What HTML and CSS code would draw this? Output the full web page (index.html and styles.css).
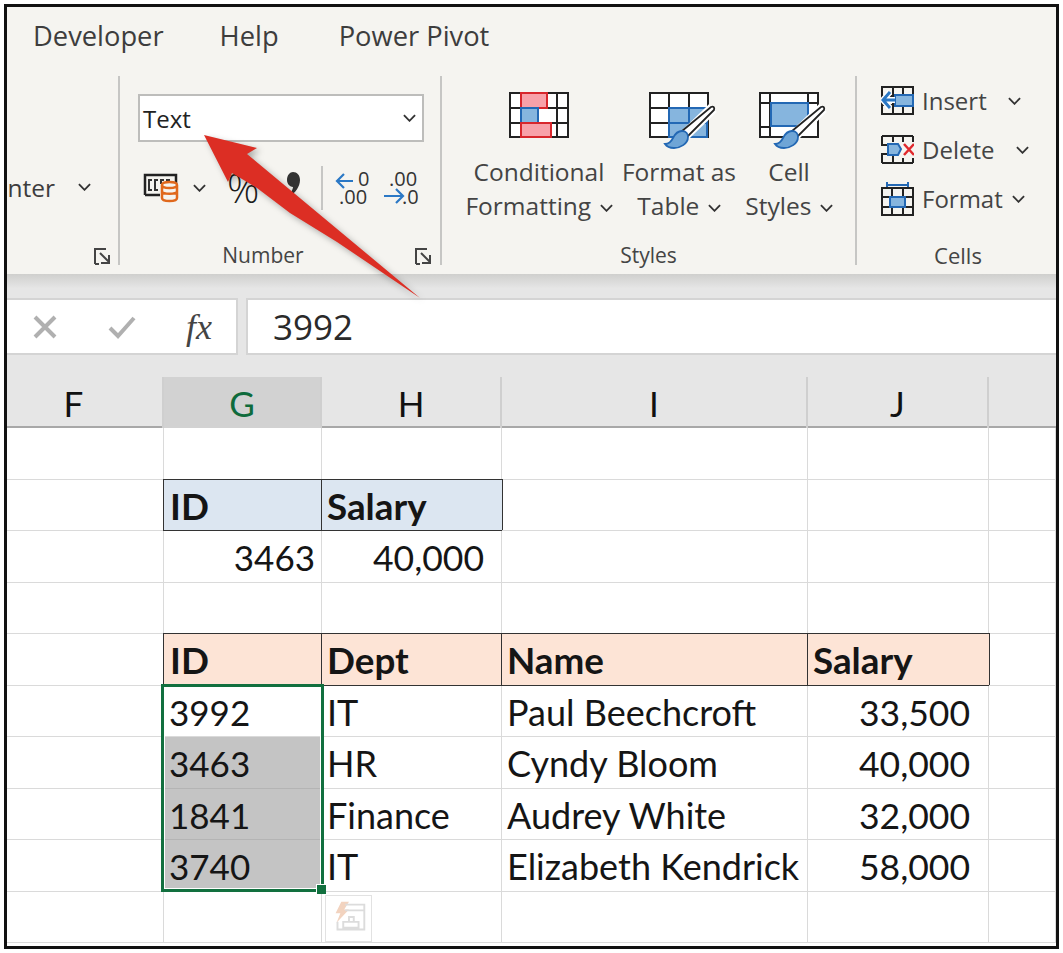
FILE: index.html
```html
<!DOCTYPE html>
<html lang="en">
    <head>
        <meta charset="UTF-8" />
        <title>Excel ribbon and sheet</title>
        <link rel="stylesheet" href="styles.css">
    </head>

    <body>
        <div class="frame">
            <div class="ribbon">
                <div class="tabs">
                    <span class="tab tab-dev">Developer</span>
                    <span class="tab tab-help">Help</span>
                    <span class="tab">Power Pivot</span>
                </div>
                <div class="groups">
                    <div class="group group-align">
                        <div class="merge-row">
                            <span>Merge &amp; Center</span>
                            <svg class="chev" viewBox="0 0 14 8"><path d="M1 1l6 6 6-6"/></svg>
                        </div>
                        <svg class="launcher launcher-a" viewBox="0 0 18 17"><path d="M1 16V1h11M6 5l9 9M15 7v8H7M1 16h4"/></svg>
                    </div>

                    <div class="group group-number">
                        <div class="format-box">
                            <span>Text</span>
                            <svg class="chev" viewBox="0 0 14 8"><path d="M1 1l6 6 6-6"/></svg>
                        </div>
                        <div class="number-row">
                            <svg class="ico-money" viewBox="0 0 34 28">
                                <path class="blk" d="M1 21V1h31v9M1 21h15"/>
                                <path class="thin" d="M8 6H5v10h3M14 6h-3v10h3M20 6h-3v4M26 6h-3v3"/>
                                <path class="db" d="M18 11c0-4 15-4 15 0v13c0 4-15 4-15 0zM18 11c0 4 15 4 15 0M18 17.500c0 3 15 3 15 0"/>
                            </svg>
                            <svg class="chev chev-money" viewBox="0 0 14 8"><path d="M1 1l6 6 6-6"/></svg>
                            <span class="percent">%</span>
                            <svg class="ico-comma" viewBox="0 0 15 26"><path d="M7 1c4 0 7 3 7 8 0 7-5 13-10 16l-1-1c2-2 4-6 4-8-3 0-6-3-6-7 0-5 3-8 6-8z"/></svg>
                            <span class="num-sep"></span>
                            <svg class="ico-dec" viewBox="0 0 34 36">
                                <path class="arrow-blue" d="M18 11H2M9 4l-7 7 7 7"/>
                                <text x="23" y="16">0</text>
                                <text x="4" y="34">.00</text>
                            </svg>
                            <svg class="ico-dec ico-dec-b" viewBox="0 0 34 36">
                                <text x="5" y="16">.00</text>
                                <path class="arrow-blue" d="M0 26h18M12 19l7 7-7 7"/>
                                <text x="18" y="34">.0</text>
                            </svg>
                        </div>
                        <div class="group-label label-number">Number</div>
                        <svg class="launcher launcher-b" viewBox="0 0 18 17"><path d="M1 16V1h11M6 5l9 9M15 7v8H7M1 16h4"/></svg>
                    </div>

                    <div class="group group-styles">
                        <div class="big-row">
                            <div class="big-btn big-cf">
                                <svg class="big-ico" viewBox="0 0 60 46">
                                    <rect class="white" x="1" y="1" width="58" height="44"/>
                                    <path class="blk-thin" d="M48 1v44M38 1v44M1 16h58M1 31h58"/>
                                    <rect class="white-fill" x="30" y="17" width="17" height="13"/>
                                    <rect class="red" x="12" y="1" width="26" height="15"/>
                                    <rect class="blue" x="12" y="16" width="17" height="15"/>
                                    <rect class="red" x="12" y="31" width="30" height="14"/>
                                </svg>
                                <div class="big-text">Conditional<br>Formatting <svg class="chev" viewBox="0 0 14 8"><path d="M1 1l6 6 6-6"/></svg></div>
                            </div>
                            <div class="big-btn big-table">
                                <svg class="big-ico" viewBox="0 0 60 46">
                                    <rect class="white" x="1" y="1" width="58" height="44"/>
                                    <path class="blk-thin" d="M20 1v44M40 1v44M1 16h58M1 31h58"/>
                                    <path class="blue" d="M20 16h38v29H20z"/>
                                    <path class="blue-line" d="M40 16v29M20 31h38"/>
                                    <path class="brush-halo" d="M64 16L35 44"/>
                                    <path class="brush-handle" d="M62 15c2-1 4 0 3 3L39 44l-6-5z"/>
                                    <path class="brush-head" d="M33 39c4 0 6 3 6 6 0 7-8 11-14 11-4 0-7-1-9-4 4 0 6-2 8-6 2-4 5-7 9-7z"/>
                                </svg>
                                <div class="big-text">Format as<br>Table <svg class="chev" viewBox="0 0 14 8"><path d="M1 1l6 6 6-6"/></svg></div>
                            </div>
                            <div class="big-btn big-cell">
                                <svg class="big-ico" viewBox="0 0 60 46">
                                    <rect class="white" x="1" y="1" width="58" height="44"/>
                                    <path class="blk-thin" d="M11 1v44M49 1v10M1 11h58M1 35h10"/>
                                    <rect class="blue" x="12" y="11" width="37" height="23"/>
                                    <path class="brush-halo" d="M64 16L35 44"/>
                                    <path class="brush-handle" d="M62 15c2-1 4 0 3 3L39 44l-6-5z"/>
                                    <path class="brush-head" d="M33 39c4 0 6 3 6 6 0 7-8 11-14 11-4 0-7-1-9-4 4 0 6-2 8-6 2-4 5-7 9-7z"/>
                                </svg>
                                <div class="big-text">Cell<br>Styles <svg class="chev" viewBox="0 0 14 8"><path d="M1 1l6 6 6-6"/></svg></div>
                            </div>
                        </div>
                        <div class="group-label">Styles</div>
                    </div>

                    <div class="group group-cells">
                        <div class="cell-btn">
                            <svg class="cell-ico" viewBox="0 0 33 29">
                                <path class="blk-thin" d="M1 1h31v27H1zM1 10h31M1 19h31M12 1v27M22 1v27"/>
                                <rect class="blue" x="14" y="9" width="18" height="11"/>
                                <path class="arrow-white" d="M14 14H2M9 6l-7 8 7 8"/>
                                <path class="arrow-blue arrow-thick" d="M14 14H2M9 6l-7 8 7 8"/>
                            </svg>
                            <span>Insert</span>
                            <svg class="chev chev-insert" viewBox="0 0 14 8"><path d="M1 1l6 6 6-6"/></svg>
                        </div>
                        <div class="cell-btn">
                            <svg class="cell-ico" viewBox="0 0 33 29">
                                <path class="blk-thin" d="M1 1h31M1 28h31M1 1v9h7M1 28v-9h7M12 19v9M22 23v5M32 23v5M12 1v6M22 1v6M32 1v6"/>
                                <path class="blue" d="M7 9h10l3 5-3 6H7z"/>
                                <path class="x-red" d="M23 9l10 11M33 9L23 20"/>
                            </svg>
                            <span>Delete</span>
                            <svg class="chev chev-delete" viewBox="0 0 14 8"><path d="M1 1l6 6 6-6"/></svg>
                        </div>
                        <div class="cell-btn">
                            <svg class="cell-ico cell-ico-tall" viewBox="0 0 33 34">
                                <path class="blue-line" d="M6 3h21M6 0v6M27 0v6"/>
                                <path class="blk-thin" d="M1 6h31v27H1zM1 15h31M1 25h31M11 6v27M22 6v27"/>
                                <rect class="blue" x="9" y="15" width="15" height="10"/>
                            </svg>
                            <span>Format</span>
                            <svg class="chev chev-format" viewBox="0 0 14 8"><path d="M1 1l6 6 6-6"/></svg>
                        </div>
                        <div class="group-label label-cells">Cells</div>
                    </div>
                </div>
            </div>

            <div class="ribbon-shadow"></div>

            <div class="formula-bar">
                <div class="fx-box">
                    <svg class="fx-ico fx-x" viewBox="0 0 24 24"><path d="M2 2l20 20M22 2L2 22"/></svg>
                    <svg class="fx-ico fx-check" viewBox="0 0 28 24"><path d="M2 13l8 8L26 3"/></svg>
                    <span class="fx-label">fx</span>
                </div>
                <div class="formula-input">3992</div>
            </div>

            <div class="col-heads">
                <div class="col-head col-f">F</div>
                <div class="col-head col-active">G</div>
                <div class="col-head">H</div>
                <div class="col-head">I</div>
                <div class="col-head">J</div>
                <div class="col-head col-last"></div>
            </div>

            <div class="sheet">
                <div class="c"></div><div class="c"></div><div class="c"></div><div class="c"></div><div class="c"></div><div class="c"></div>

                <div class="c"></div><div class="c th-blue th-id">ID</div><div class="c th-blue">Salary</div><div class="c"></div><div class="c"></div><div class="c"></div>

                <div class="c"></div><div class="c num num-near">3463</div><div class="c num num-near-b">40,000</div><div class="c"></div><div class="c"></div><div class="c"></div>

                <div class="c"></div><div class="c"></div><div class="c"></div><div class="c"></div><div class="c"></div><div class="c"></div>

                <div class="c"></div><div class="c th-peach th-id">ID</div><div class="c th-peach">Dept</div><div class="c th-peach">Name</div><div class="c th-peach">Salary</div><div class="c"></div>

                <div class="c"></div><div class="c id">3992</div><div class="c">IT</div><div class="c">Paul Beechcroft</div><div class="c num">33,500</div><div class="c"></div>

                <div class="c"></div><div class="c id sel">3463</div><div class="c">HR</div><div class="c">Cyndy Bloom</div><div class="c num">40,000</div><div class="c"></div>

                <div class="c"></div><div class="c id sel">1841</div><div class="c">Finance</div><div class="c">Audrey White</div><div class="c num">32,000</div><div class="c"></div>

                <div class="c"></div><div class="c id sel">3740</div><div class="c">IT</div><div class="c">Elizabeth Kendrick</div><div class="c num">58,000</div><div class="c"></div>

                <div class="c"></div><div class="c"></div><div class="c"></div><div class="c"></div><div class="c"></div><div class="c"></div>

                <!-- selection box and paste options sit over the cells -->
                <div class="selection"><span class="fill-handle"></span></div>
                <div class="paste-opts">
                    <svg viewBox="0 0 47 47">
                        <path class="bolt" d="M16 6h8l-5 8h5L11 28l4-10h-5z"/>
                        <path class="paste" d="M20 9h20v26H12v-8M20 15h20M18 27h16v6H18zM24 27v-5h5v5"/>
                    </svg>
                </div>
            </div>

            <!-- red callout arrow -->
            <svg class="callout" viewBox="0 0 1063 953">
                <path d="M204 135L257 148 247 154 420 298 337 242 290 213 257 188 232 173 228 182z"/>
            </svg>
        </div>
    </body>
</html>
```

FILE: styles.css
```css
* {
    margin: 0;
    padding: 0;
    box-sizing: border-box;
}

html,
body {
    height: 100%;
    background: #fff;
}

body {
    overflow: hidden;
    font-family: "Open Sans", "Noto Sans", sans-serif;
}

.frame {
    position: relative;
    margin: 4px;
    width: 1055px;
    height: 945px;
    border: 3px solid #111;
    background: #e6e6e6;
    overflow: hidden;
}

/* ribbon */
.ribbon {
    height: 267px;
    background: #f5f4f0;
    color: #3d3d3d;
}

.tabs {
    display: flex;
    height: 69px;
    padding: 9px 0 0 26px;
    font-size: 27.300px;
    line-height: 40px;
}

.tab-dev {
    margin-right: 56px;
}

.tab-help {
    margin-right: 60px;
}

.groups {
    display: flex;
    height: 189px;
}

.group {
    position: relative;
    border-right: 2px solid #c6c6c4;
    flex: none;
}

.group-label {
    position: absolute;
    left: 0;
    right: 0;
    bottom: -4px;
    text-align: center;
    font-size: 21px;
    line-height: 28px;
    color: #444;
}

.label-number {
    right: 34px;
}

.label-cells {
    left: 5px;
    font-size: 22px;
}

.chev {
    flex: none;
    width: 13px;
    height: 8px;
    fill: none;
    stroke: #333;
    stroke-width: 2;
}

.launcher {
    position: absolute;
    bottom: 0;
    width: 18px;
    height: 17px;
    fill: none;
    stroke: #444;
    stroke-width: 2;
}

.launcher-a {
    right: 6px;
}

.launcher-b {
    right: 7px;
}

.group-align {
    width: 113px;
    overflow: hidden;
}

.merge-row {
    display: flex;
    align-items: center;
    justify-content: flex-end;
    gap: 23px;
    margin-top: 93px;
    padding-right: 27px;
    height: 36px;
    font-size: 24.500px;
    white-space: nowrap;
}

.group-number {
    width: 322px;
    padding: 18px 0 0 18px;
}

.format-box {
    display: flex;
    align-items: center;
    justify-content: space-between;
    width: 286px;
    height: 48px;
    padding: 0 6px 0 3px;
    background: #fff;
    border: 2px solid #bdbdbb;
    font-size: 24px;
    color: #222;
}

.number-row {
    display: flex;
    align-items: center;
    height: 44px;
    margin-top: 24px;
}

.ico-money {
    flex: none;
    width: 34px;
    height: 28px;
    margin-left: 6px;
    overflow: visible;
}

.ico-money .blk {
    fill: none;
    stroke: #222;
    stroke-width: 2.500;
}

.ico-money .thin {
    fill: none;
    stroke: #333;
    stroke-width: 2;
}

.ico-money .db {
    fill: #f5f4f0;
    stroke: #e0681c;
    stroke-width: 2.500;
}

.chev-money {
    margin-left: 15px;
}

.percent {
    width: 32px;
    margin-left: 21px;
    font-size: 40px;
    font-weight: 300;
    line-height: 44px;
    color: #1c1c1c;
}

.ico-comma {
    flex: none;
    width: 15px;
    height: 26px;
    margin: 0 0 8px 27px;
    fill: #333;
}

.num-sep {
    flex: none;
    width: 2px;
    height: 44px;
    margin-left: 20px;
    background: #c6c6c4;
}

.ico-dec {
    flex: none;
    width: 34px;
    height: 36px;
    margin-left: 12px;
    overflow: visible;
}

.ico-dec-b {
    margin-left: 15px;
}

.ico-dec text {
    font-family: "Open Sans", sans-serif;
    font-size: 20px;
    fill: #333;
}

.arrow-blue {
    fill: none;
    stroke: #2b78c5;
    stroke-width: 2.200;
}

.arrow-thick {
    stroke-width: 3;
}

.arrow-white {
    fill: none;
    stroke: #fff;
    stroke-width: 6;
}

.group-styles {
    width: 415px;
    padding: 16px 0 0 22px;
}

.big-row {
    display: flex;
}

.big-btn {
    display: flex;
    flex-direction: column;
    align-items: center;
}

.big-cf {
    width: 150px;
}

.big-table {
    width: 112px;
    margin-left: 9px;
}

.big-cell {
    width: 90px;
    margin-left: 9px;
}

.big-ico {
    flex: none;
    width: 60px;
    height: 46px;
    overflow: visible;
}

.big-text {
    margin-top: 17px;
    font-size: 24.500px;
    line-height: 34px;
    text-align: center;
    white-space: nowrap;
    color: #444;
}

.big-text .chev {
    margin-left: 2px;
    vertical-align: 3px;
}

.white {
    fill: #fff;
    stroke: #222;
    stroke-width: 2;
}

.white-fill {
    fill: #fff;
}

.blk-thin {
    fill: none;
    stroke: #222;
    stroke-width: 2;
}

.red {
    fill: #f8a1a9;
    stroke: #d8262c;
    stroke-width: 2;
}

.blue {
    fill: #86b5de;
    stroke: #2368b4;
    stroke-width: 2;
}

.blue-line {
    fill: none;
    stroke: #2368b4;
    stroke-width: 2;
}

.brush-halo {
    fill: none;
    stroke: #fff;
    stroke-width: 11;
}

.brush-handle {
    fill: #fff;
    stroke: #222;
    stroke-width: 1.800;
}

.brush-head {
    fill: #6fa5d6;
    stroke: #2368b4;
    stroke-width: 1.800;
}

.x-red {
    fill: none;
    stroke: #e0282c;
    stroke-width: 2.500;
}

.group-cells {
    width: 197px;
    padding-left: 24px;
    border-right: 0;
}

.cell-btn {
    display: flex;
    align-items: center;
    height: 49px;
    font-size: 24px;
    color: #444;
}

.cell-ico {
    flex: none;
    width: 33px;
    height: 29px;
    margin-right: 8px;
}

.cell-ico-tall {
    height: 34px;
}

.chev-insert {
    margin-left: 21px;
}

.chev-delete {
    margin-left: 22px;
}

.chev-format {
    margin-left: 9px;
}

.ribbon-shadow {
    height: 24px;
    background: linear-gradient(#cfcfcd, #e6e6e6 60%);
}

/* formula bar */
.formula-bar {
    display: flex;
    gap: 8px;
    height: 57px;
}

.fx-box {
    display: flex;
    align-items: center;
    flex: none;
    width: 231px;
    background: #fff;
    border-right: 2px solid #d4d4d4;
    border-top: 2px solid #d4d4d4;
    border-bottom: 2px solid #d4d4d4;
}

.fx-ico {
    flex: none;
    fill: none;
    stroke: #b0b0b0;
    stroke-width: 4;
}

.fx-x {
    width: 24px;
    height: 24px;
    margin-left: 26px;
}

.fx-check {
    width: 28px;
    height: 24px;
    margin-left: 51px;
}

.fx-label {
    margin-left: 50px;
    font-family: "Liberation Serif", serif;
    font-style: italic;
    font-size: 36px;
    color: #444;
}

.formula-input {
    flex: 1;
    padding-left: 25px;
    background: #fff;
    border-top: 2px solid #d4d4d4;
    border-bottom: 2px solid #d4d4d4;
    border-left: 2px solid #d4d4d4;
    font-size: 35px;
    line-height: 54px;
    color: #2a2a2a;
}

/* column headers */
.col-heads,
.sheet {
    display: grid;
    grid-template-columns: 157px 158px 180px 306px 181px 67px;
}

.col-heads {
    height: 51px;
    margin-top: 22px;
    border-bottom: 2px solid #a8a8a8;
}

.col-head {
    border-right: 2px solid #cfcfcf;
    text-align: center;
    font-family: Lato, sans-serif;
    font-size: 35px;
    line-height: 52px;
    color: #111;
}

.col-f {
    padding-right: 22px;
}

.col-last {
    border-right: 0;
}

.col-active {
    background: #d2d2d2;
    color: #0f6b3c;
    border-bottom: 3px solid #107c41;
    margin-bottom: -2px;
}

/* cells */
.sheet {
    position: relative;
    grid-auto-rows: 51.500px;
    background: #fff;
    height: 518px;
    font-family: Lato, sans-serif;
    font-size: 36px;
    color: #151515;
}

.c {
    padding-left: 5px;
    border-right: 1.500px solid #dadada;
    border-bottom: 1.500px solid #dadada;
    line-height: 53px;
    white-space: nowrap;
}

.id {
    padding-left: 5px;
    font-size: 35px;
}

.num {
    text-align: right;
    padding-right: 18px;
    font-size: 35.500px;
}

.num-near {
    padding-right: 6px;
    font-size: 35px;
}

.num-near-b {
    padding-right: 17px;
}

.th-blue,
.th-peach {
    font-weight: 700;
    font-size: 36.800px;
    border: 1.500px solid #333;
    margin: -1px -1px 0 -1px;
    padding-left: 5px;
    line-height: 53px;
}

.th-id {
    padding-left: 6px;
}

.th-blue {
    background: #dce6f1;
}

.th-peach {
    background: #fde4d6;
}

.sel {
    background: #c4c4c4;
    border-right-color: #c4c4c4;
    border-bottom-color: #b4b4b4;
}

.selection {
    position: absolute;
    left: 154px;
    top: 256px;
    width: 163px;
    height: 208px;
    border: 3px solid #12703f;
    box-shadow: inset 0 0 0 1px #fff;
}

.fill-handle {
    position: absolute;
    right: -5px;
    bottom: -5px;
    width: 10px;
    height: 10px;
    background: #12703f;
    border-left: 1px solid #fff;
    border-top: 1px solid #fff;
}

.paste-opts {
    position: absolute;
    left: 318px;
    top: 467px;
    width: 47px;
    height: 47px;
    border: 1.500px solid #e2e2e2;
    background: #fff;
}

.paste-opts svg {
    display: block;
    width: 100%;
    height: 100%;
}

.bolt {
    fill: #f2d3bf;
}

.paste {
    fill: none;
    stroke: #dcdcdc;
    stroke-width: 2;
}

.callout {
    position: absolute;
    left: -7px;
    top: -7px;
    width: 1063px;
    height: 953px;
    pointer-events: none;
    filter: drop-shadow(3px 3px 3px rgba(0, 0, 0, 0.3));
}

.callout path {
    fill: #dc2e24;
}
```
